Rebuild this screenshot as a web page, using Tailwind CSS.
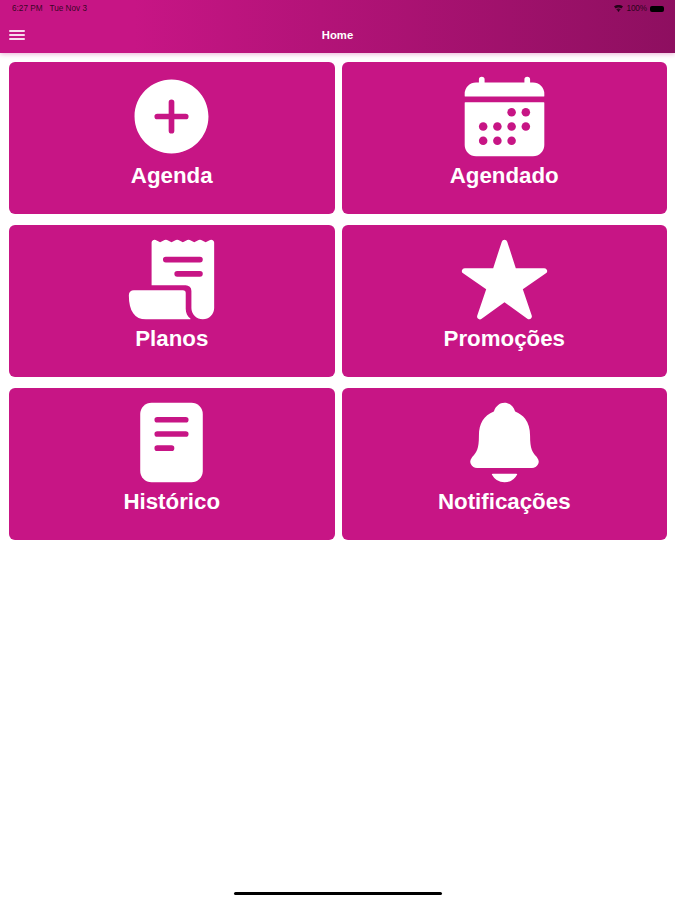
<!DOCTYPE html>
<html lang="pt-BR">
<head>
    <meta charset="UTF-8">
    <meta name="viewport" content="width=device-width, initial-scale=1.0">
    <title>Home</title>
    <script src="https://cdn.jsdelivr.net/npm/@tailwindcss/browser@4"></script>
</head>
<body class="flex flex-col h-screen overflow-hidden bg-white font-['Liberation_Sans',Arial,sans-serif]">
    <header class="h-[53px] shrink-0 bg-linear-to-r from-[#c71585] from-20% to-[#8e0f60] shadow-[0_1px_5px_rgba(199,21,133,0.35)]">
        <!-- Status bar -->
        <div class="flex items-center justify-between h-[17px] pl-3 pr-[11px] text-[8.2px] leading-[17px] text-black/75">
            <div class="flex gap-[7px]">
                <span>6:27 PM</span>
                <span>Tue Nov 3</span>
            </div>
            <div class="flex items-center gap-[3px]">
                <svg class="w-[9px] h-[7px]" viewBox="0 0 18 14" fill="currentColor">
                    <path d="M9 14l2.6-3.2a4 4 0 00-5.2 0zM4.6 8.6l1.3 1.6a5 5 0 016.2 0l1.3-1.6a7 7 0 00-8.8 0zM0 3l3.4 4.1a9 9 0 0111.2 0L18 3A14 14 0 000 3z"/>
                </svg>
                <span class="tracking-[-0.1px]">100%</span>
                <div class="w-[14px] h-[6px] rounded-[2px] bg-black"></div>
            </div>
        </div>
        <!-- Toolbar -->
        <div class="grid grid-cols-3 items-center h-9 px-[9px] text-white">
            <button class="flex flex-col gap-[2px] w-4" aria-label="Menu">
                <span class="h-[2px] w-4 rounded-full bg-white/85"></span>
                <span class="h-[2px] w-4 rounded-full bg-white/85"></span>
                <span class="h-[2px] w-4 rounded-full bg-white/85"></span>
            </button>
            <h1 class="text-center text-[11.3px] font-bold">Home</h1>
        </div>
    </header>

    <main class="grid grid-cols-2 gap-x-[7px] gap-y-[11px] pt-[9px] pl-[9px] pr-2 text-white">
        <a class="flex flex-col items-center h-[152px] pt-[8.5px] rounded-md bg-[#c71585]">
            <svg class="size-[91px] shrink-0" viewBox="0 0 512 512" fill="currentColor">
                <path d="M256 48C141.31 48 48 141.31 48 256s93.31 208 208 208 208-93.31 208-208S370.69 48 256 48zm80 224h-64v64a16 16 0 01-32 0v-64h-64a16 16 0 010-32h64v-64a16 16 0 0132 0v64h64a16 16 0 010 32z"/>
            </svg>
            <span class="text-[22.3px] leading-7 font-bold">Agenda</span>
        </a>

        <a class="flex flex-col items-center h-[152px] pt-[8.5px] rounded-md bg-[#c71585]">
            <svg class="size-[91px] shrink-0" viewBox="0 0 512 512" fill="currentColor">
                <path d="M480 128a64 64 0 00-64-64h-16V48a16 16 0 00-32 0v16H144V48a16 16 0 00-32 0v16H96a64 64 0 00-64 64v12a4 4 0 004 4h440a4 4 0 004-4zM32 416a64 64 0 0064 64h320a64 64 0 0064-64V179a3 3 0 00-3-3H35a3 3 0 00-3 3z"/>
                <g fill="#c71585">
                    <circle cx="296" cy="232" r="24"/>
                    <circle cx="376" cy="232" r="24"/>
                    <circle cx="136" cy="312" r="24"/>
                    <circle cx="216" cy="312" r="24"/>
                    <circle cx="296" cy="312" r="24"/>
                    <circle cx="376" cy="312" r="24"/>
                    <circle cx="136" cy="392" r="24"/>
                    <circle cx="216" cy="392" r="24"/>
                    <circle cx="296" cy="392" r="24"/>
                </g>
            </svg>
            <span class="text-[22.3px] leading-7 font-bold">Agendado</span>
        </a>

        <a class="flex flex-col items-center h-[152px] pt-[8.5px] rounded-md bg-[#c71585]">
            <svg class="size-[91px] shrink-0" viewBox="0 0 512 512" fill="currentColor">
                <path d="M144 48a16 16 0 0123-14l25 12 25-12a16 16 0 0114 0l25 12 25-12a16 16 0 0114 0l25 12 25-12a16 16 0 0114 0l25 12 25-12a16 16 0 0114 0l25 12 25-12a16 16 0 0123 14v368a64 64 0 01-128 0V320a32 32 0 00-32-32H144z"/>
                <path d="M44 316H320a16 16 0 0116 16v88c0 24 10 44 26 56 2 2 1 4-2 4H112c-62 0-96-46-96-136a28 28 0 0128-28z"/>
                <path d="M224 144h192M288 224h128" fill="none" stroke="#c71585" stroke-width="32" stroke-linecap="round"/>
            </svg>
            <span class="text-[22.3px] leading-7 font-bold">Planos</span>
        </a>

        <a class="flex flex-col items-center h-[152px] pt-[8.5px] rounded-md bg-[#c71585]">
            <svg class="size-[91px] shrink-0" viewBox="0 0 512 512" fill="currentColor">
                <path d="M394 480a16 16 0 01-9.39-3L256 383.76 127.39 477a16 16 0 01-24.55-18.08L153 310.35 23 221.2a16 16 0 019-29.2h160.38l48.4-148.95a16 16 0 0130.44 0l48.4 149H480a16 16 0 019.05 29.2L359 310.35l50.13 148.53A16 16 0 01394 480z"/>
            </svg>
            <span class="text-[22.3px] leading-7 font-bold">Promoções</span>
        </a>

        <a class="flex flex-col items-center h-[152px] pt-[8.5px] rounded-md bg-[#c71585]">
            <svg class="size-[91px] shrink-0" viewBox="0 0 512 512" fill="currentColor">
                <rect x="80" y="32" width="352" height="448" rx="64"/>
                <path d="M176 128h160M176 208h160M176 288h80" fill="none" stroke="#c71585" stroke-width="32" stroke-linecap="round"/>
            </svg>
            <span class="text-[22.3px] leading-7 font-bold">Histórico</span>
        </a>

        <a class="flex flex-col items-center h-[152px] pt-[8.5px] rounded-md bg-[#c71585]">
            <svg class="size-[91px] shrink-0" viewBox="0 0 512 512" fill="currentColor">
                <path d="M440.08 341.31c-1.66-2-3.29-4-4.89-5.93-22-26.61-35.31-42.67-35.31-118 0-39-9.33-71-27.72-95-13.56-17.73-31.89-31.18-56.05-41.12a3 3 0 01-.82-.67C306.6 51.49 282.82 32 256 32s-50.59 19.49-59.28 48.56a3.13 3.13 0 01-.81.65c-56.38 23.21-83.78 67.74-83.78 136.14 0 75.36-13.29 91.42-35.31 118-1.6 1.93-3.23 3.89-4.89 5.93a35.16 35.16 0 00-4.65 37.62c6.17 13 19.32 21.07 34.33 21.07H410.5c14.94 0 28-8.06 34.19-21a35.17 35.17 0 00-4.61-37.66zM256 480a80.06 80.06 0 0070.44-42.13 4 4 0 00-3.54-5.87H189.12a4 4 0 00-3.55 5.87A80.06 80.06 0 00256 480z"/>
            </svg>
            <span class="text-[22.3px] leading-7 font-bold">Notificações</span>
        </a>
    </main>

    <!-- Home indicator -->
    <div class="mt-auto mb-[5px] mx-auto w-[208px] h-[3px] shrink-0 rounded-full bg-black"></div>
</body>
</html>
